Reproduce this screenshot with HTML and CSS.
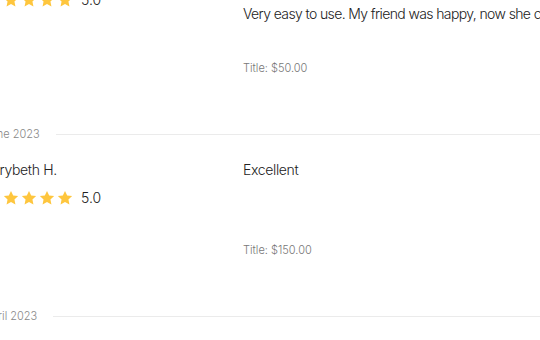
FILE: index.html
```html
<!DOCTYPE html>
<html>
<head>
<meta charset="utf-8">
<link rel="stylesheet" href="styles.css">
</head>
<body>
<div class="list">
  <div class="review review--first">
    <div class="meta">
      <div class="rating">
        <span class="stars">
          <svg class="star" viewBox="0 0 24 24"><path d="M12 2.5l2.9 6.1 6.6.8-4.9 4.6 1.3 6.6L12 17.3l-5.9 3.3 1.3-6.6-4.9-4.6 6.6-.8z"/></svg>
          <svg class="star" viewBox="0 0 24 24"><path d="M12 2.5l2.9 6.1 6.6.8-4.9 4.6 1.3 6.6L12 17.3l-5.9 3.3 1.3-6.6-4.9-4.6 6.6-.8z"/></svg>
          <svg class="star" viewBox="0 0 24 24"><path d="M12 2.5l2.9 6.1 6.6.8-4.9 4.6 1.3 6.6L12 17.3l-5.9 3.3 1.3-6.6-4.9-4.6 6.6-.8z"/></svg>
          <svg class="star" viewBox="0 0 24 24"><path d="M12 2.5l2.9 6.1 6.6.8-4.9 4.6 1.3 6.6L12 17.3l-5.9 3.3 1.3-6.6-4.9-4.6 6.6-.8z"/></svg>
          <svg class="star" viewBox="0 0 24 24"><path d="M12 2.5l2.9 6.1 6.6.8-4.9 4.6 1.3 6.6L12 17.3l-5.9 3.3 1.3-6.6-4.9-4.6 6.6-.8z"/></svg>
        </span>
        <span class="score">5.0</span>
      </div>
    </div>
    <div class="content">
      <p class="text">Very easy to use. My friend was happy, now she can send gifts to everyone she knows.</p>
      <p class="title">Title: $50.00</p>
    </div>
  </div>

  <div class="month"><span class="month-label">June 2023</span><span class="rule"></span></div>

  <div class="review">
    <div class="meta">
      <p class="name">Marybeth H.</p>
      <div class="rating rating--spaced">
        <span class="stars">
          <svg class="star" viewBox="0 0 24 24"><path d="M12 2.5l2.9 6.1 6.6.8-4.9 4.6 1.3 6.6L12 17.3l-5.9 3.3 1.3-6.6-4.9-4.6 6.6-.8z"/></svg>
          <svg class="star" viewBox="0 0 24 24"><path d="M12 2.5l2.9 6.1 6.6.8-4.9 4.6 1.3 6.6L12 17.3l-5.9 3.3 1.3-6.6-4.9-4.6 6.6-.8z"/></svg>
          <svg class="star" viewBox="0 0 24 24"><path d="M12 2.5l2.9 6.1 6.6.8-4.9 4.6 1.3 6.6L12 17.3l-5.9 3.3 1.3-6.6-4.9-4.6 6.6-.8z"/></svg>
          <svg class="star" viewBox="0 0 24 24"><path d="M12 2.5l2.9 6.1 6.6.8-4.9 4.6 1.3 6.6L12 17.3l-5.9 3.3 1.3-6.6-4.9-4.6 6.6-.8z"/></svg>
          <svg class="star" viewBox="0 0 24 24"><path d="M12 2.5l2.9 6.1 6.6.8-4.9 4.6 1.3 6.6L12 17.3l-5.9 3.3 1.3-6.6-4.9-4.6 6.6-.8z"/></svg>
        </span>
        <span class="score">5.0</span>
      </div>
    </div>
    <div class="content">
      <p class="text text--short">Excellent</p>
      <p class="title title--low">Title: $150.00</p>
    </div>
  </div>

  <div class="month month--last"><span class="month-label">April 2023</span><span class="rule"></span></div>
</div>
</body>
</html>
```

FILE: styles.css
```css
html, body {
  margin: 0;
  padding: 0;
  background: #ffffff;
  overflow: hidden;
}
body {
  width: 540px;
  height: 340px;
  font-family: Inter, "Liberation Sans", sans-serif;
  color: #333333;
}
p { margin: 0; }

.list {
  margin-left: -16px;
  margin-top: -8px;
  width: 760px;
}

.review {
  display: grid;
  grid-template-columns: 259px 1fr;
}

.meta {
  display: flex;
  flex-direction: column;
}

.name {
  margin-left: -4px;
  font-size: 14px;
  font-weight: 300;
  line-height: 20px;
  letter-spacing: -0.35px;
  color: #222;
}

.rating {
  display: flex;
  align-items: center;
  height: 16px;
}
.rating--spaced { margin-top: 10px; }

.stars {
  display: flex;
}
.star {
  width: 18px;
  height: 18px;
  fill: #fec63e;
}
.score {
  margin-left: 7px;
  font-size: 14px;
  font-weight: 300;
  line-height: 16px;
  color: #222;
}

.content {
  display: flex;
  flex-direction: column;
}
.text {
  padding-top: 12px;
  font-size: 14px;
  font-weight: 300;
  line-height: 20px;
  letter-spacing: -0.62px;
  white-space: nowrap;
  color: #222;
}
.text--short {
  padding-top: 0;
  letter-spacing: -0.35px;
}

.title {
  margin-top: 36px;
  font-size: 11px;
  font-weight: 300;
  line-height: 16px;
  color: #777;
}
.title--low { margin-top: 62px; }

.month {
  display: flex;
  align-items: center;
  height: 16px;
  margin-top: 50px;
  margin-bottom: 18px;
}
.month-label {
  font-size: 11px;
  font-weight: 300;
  line-height: 16px;
  color: #888;
}
.rule {
  flex: 1;
  height: 1px;
  margin-left: 16px;
  background: #ebebeb;
}
```
